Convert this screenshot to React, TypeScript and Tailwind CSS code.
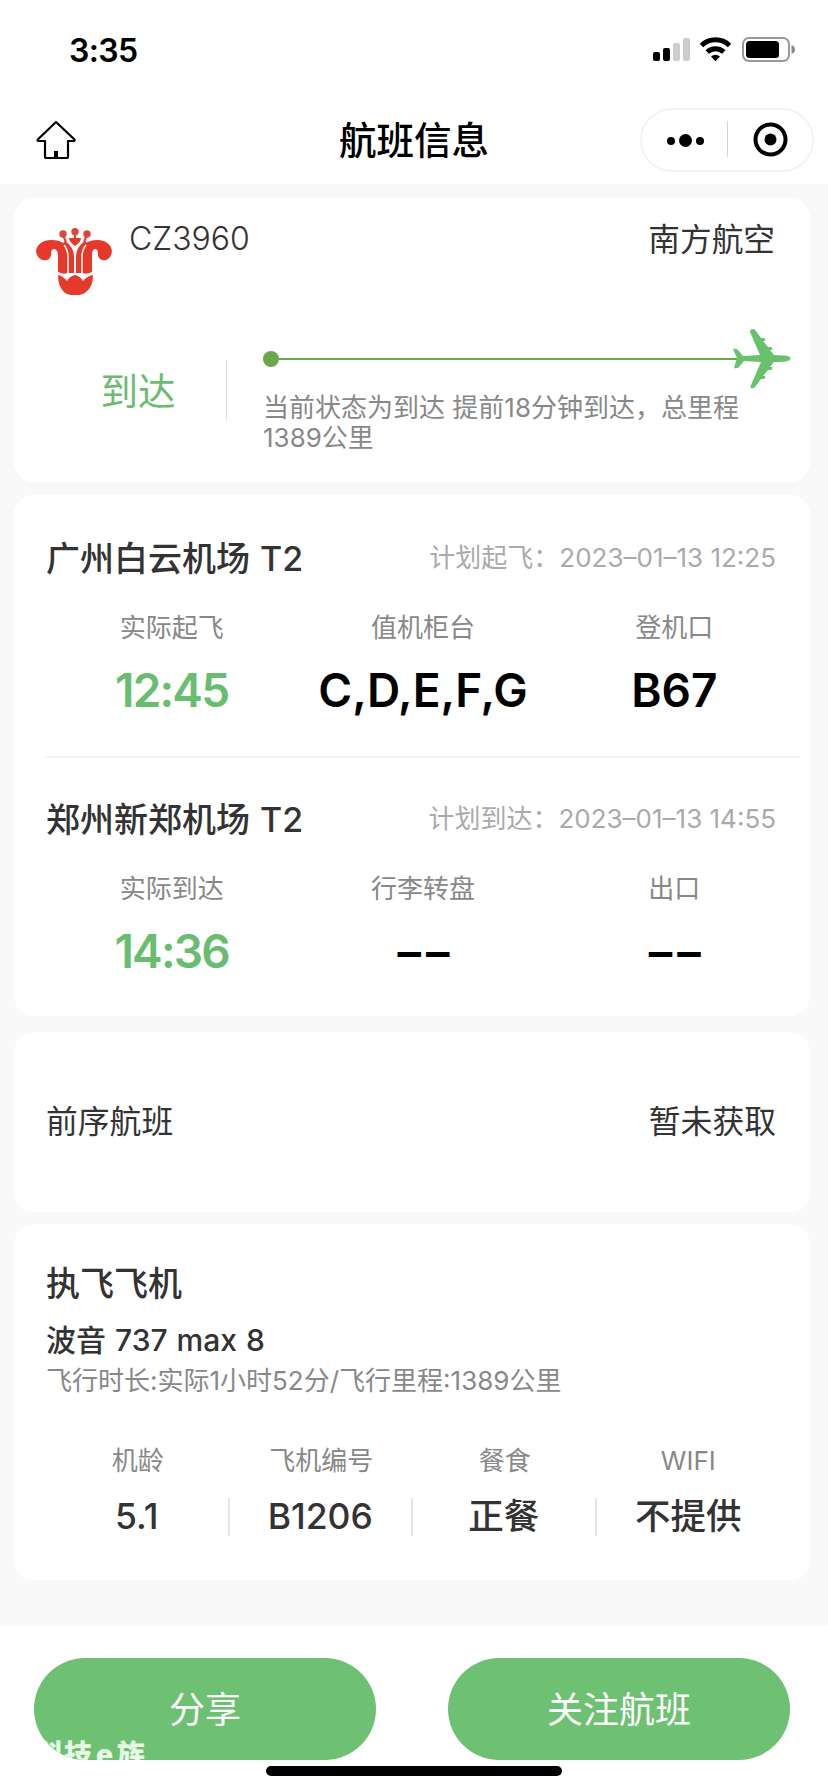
import React from "react";

const airports = [
    {
        name: "广州白云机场 T2",
        plan: "计划起飞：",
        planTime: "2023–01–13 12:25",
        items: [
            { label: "实际起飞", value: "12:45", green: true },
            { label: "值机柜台", value: "C,D,E,F,G" },
            { label: "登机口", value: "B67" },
        ],
    },
    {
        name: "郑州新郑机场 T2",
        plan: "计划到达：",
        planTime: "2023–01–13 14:55",
        items: [
            { label: "实际到达", value: "14:36", green: true },
            { label: "行李转盘", value: "––" },
            { label: "出口", value: "––" },
        ],
    },
];

const aircraft = [
    { label: "机龄", value: "5.1" },
    { label: "飞机编号", value: "B1206" },
    { label: "餐食", value: "正餐" },
    { label: "WIFI", value: "不提供" },
];

const StatusBar = () => (
    <div className="flex h-[98px] items-center justify-between pl-[69px] pr-[33px]">
        <span className="pt-[3px] text-[32px] leading-none font-semibold tracking-[-0.6px]">3:35</span>
        <svg width="143" height="28" viewBox="0 0 143 28">
            <rect x="1" y="17" width="7" height="9" rx="2" />
            <rect x="11" y="13" width="7" height="13" rx="2" />
            <rect x="21" y="8" width="7" height="18" rx="2" fill="#cccccc" />
            <rect x="31" y="3" width="7" height="23" rx="2" fill="#cccccc" />
            <g fill="none" stroke="#000" strokeWidth="5">
                <path d="M49.500 10.500a20 20 0 0 1 28 0" />
                <path d="M55.200 17a12 12 0 0 1 16.600 0" />
            </g>
            <path d="M59 21.500q4.500-3.600 9 0l-4.500 4.800z" />
            <rect x="91" y="3" width="46" height="23" rx="6" fill="none" stroke="#999" strokeWidth="2" />
            <rect x="94" y="6" width="33" height="17" rx="3.500" />
            <path d="M139.500 10q3.500 1.500 3.500 4.500t-3.500 4.500z" fill="#888" />
        </svg>
    </div>
);

const NavBar = () => (
    <div className="flex h-[86px] items-center justify-between pb-[2px] pl-[36px] pr-[14px]">
        <div className="w-[152px]">
            <svg width="41" height="41" viewBox="0 0 41 41" fill="none" stroke="#000" strokeWidth="2.200" strokeLinejoin="round">
                <path d="M20 2 L38.500 19.500 Q39 21 37.500 21 H32 V36.500 Q32 38 30.500 38 H10.500 Q9 38 9 36.500 V21 H2.500 Q1 21 1.800 19.500 Z" />
                <path d="M20 31v7" strokeWidth="4" />
            </svg>
        </div>
        <h1 className="pt-[2px] text-[37.5px] leading-none font-medium">航班信息</h1>
        <div className="flex h-[64px] w-[174px] items-center rounded-full border-2 border-[#f3f3f3]">
            <svg width="170" height="60" viewBox="0 0 170 60">
                <circle cx="29" cy="31" r="4" />
                <circle cx="43.500" cy="30.500" r="6.500" />
                <circle cx="58" cy="31" r="4" />
                <path d="M85.500 11v36" stroke="#d4d4d4" />
                <circle cx="128.500" cy="29.500" r="15" fill="none" stroke="#000" strokeWidth="4" />
                <circle cx="128.500" cy="29.500" r="6" />
            </svg>
        </div>
    </div>
);

const AirlineLogo = () => (
    <svg width="76" height="68" viewBox="0 0 76 68" fill="#e5392b">
        <path d="M0 23C1 16 7 12 15 12 27 12 34 18 35 28V45Q34 43 31 45 28 47 22 44V28C22 21 18 20 16 22 14 24 17 27 13 31 9 34 1 32 0 23z" />
        <path d="M76 23C75 16 69 12 62 12 50 12 44 18 43 28V45Q44 43 47 45 50 47 56 44V28C56 21 59 20 61 22 63 24 60 27 64 31 68 34 75 32 76 23z" />
        <path d="M29 13q9 6 9 16v16h-5V28q0-8-6-13z" />
        <path d="M49 13q-9 6-9 16v16h5V28q0-8 6-13z" />
        <path d="M28 17q4 5 4 12v16M50 17q-4 5-4 12v16M39 22v23" fill="none" stroke="#fff" strokeWidth="1.500" />
        <path d="M33 10h12q0 4-6 8-6-4-6-8z" />
        <path d="M27 7l3 7M51 7l-3 7M39 4v8" fill="none" stroke="#e5392b" strokeWidth="2" />
        <circle cx="27" cy="6" r="3.700" fill="#d8483c" />
        <circle cx="39" cy="3.800" r="3.700" fill="#d8483c" />
        <circle cx="51" cy="6" r="3.700" fill="#d8483c" />
        <path d="M22 47q5 1 9 6 3-5 8-6 5 1 8 6 4-5 10-6 0 12-7 17-3 3-7 3h-8q-4 0-7-3-6-6-6-17z" />
    </svg>
);

const Plane = () => (
    <svg width="60" height="62" viewBox="0 0 60 62" fill="#69c16c">
        <path d="M1 21q3-1 5 1l5 6 17-1L18 4q0-3 3-3 2 0 3 2l5 7h3q2 1 1 3h-2l5 6h3q2 1 1 3h-2l4 5q11 0 15 1.500 3 1.500 0 4-4 1.500-15 1.500l-4 5h2q1 2-1 3h-3l-5 6h2q1 2-1 3h-3l-6 8q-2 2-4 1-1-1 0-3l10-23-17-1-5 6q-2 2-5 1l3-10z" />
    </svg>
);

const App = () => {
    return (
        <div className="flex h-[1792px] w-[828px] flex-col overflow-hidden bg-white font-[Inter,'Noto_Sans_CJK_SC',sans-serif] text-black">
            <StatusBar />
            <NavBar />

            <main className="h-[1441px] bg-[#f9f9f9] pt-[14px] pr-[18px] pl-[14px] text-[#333]">
                <section className="h-[284px] rounded-[20px] bg-white pt-[24px] pr-[18px] pl-[22px]">
                    <div className="flex h-[83px]">
                        <div className="pt-[6px]">
                            <AirlineLogo />
                        </div>
                        <span className="ml-[17px] text-[32px] leading-[34px] font-light">CZ3960</span>
                        <span className="ml-auto pt-px pr-[17px] text-[31.7px] leading-[34px]">南方航空</span>
                    </div>
                    <div className="flex">
                        <div className="mt-[55px] flex h-[60px] w-[191px] items-center justify-center self-start border-r border-[#ddd] pt-[4px] pl-[14px] text-[37.500px] leading-none text-[#69bd70]">
                            到达
                        </div>
                        <div className="ml-[36px] flex-1">
                            <div className="mt-[22px] flex h-[62px] items-center pt-px">
                                <span className="size-4 rounded-full bg-[#6aa84f]" />
                                <span className="h-[2px] flex-1 bg-[#6aa84f]" />
                                <span className="-ml-[5px]">
                                    <Plane />
                                </span>
                            </div>
                            <p className="w-[490px] pt-[4px] text-[26px] leading-[30px] text-[#888]">
                                当前状态为到达 提前18分钟到达，总里程
                                <br />
                                1389公里
                            </p>
                        </div>
                    </div>
                </section>

                <section className="mt-[13px] h-[521px] rounded-[20px] bg-white pl-[32px]">
                    {airports.map((airport, i) => (
                        <div key={airport.name} className={i ? "mr-[10px] h-[260px] border-t-2 border-[#f1f1f1]" : "mr-[10px] h-[261px]"}>
                            <div className={i ? "flex items-center justify-between pt-[44px] pr-[24px]" : "flex items-center justify-between pt-[46px] pr-[24px]"}>
                                <h2 className="text-[34px] leading-[36px] font-medium [word-spacing:1px]">{airport.name}</h2>
                                <div className="pb-[2px] text-[26px] leading-[34px] text-[#aaa]">
                                    {airport.plan}
                                    {airport.planTime}
                                </div>
                            </div>
                            <div className="grid grid-cols-3 text-center">
                                {airport.items.map((item) => (
                                    <div key={item.label} className="pt-[36px]">
                                        <div className="text-[26px] leading-[30px] text-[#888]">{item.label}</div>
                                        <div
                                            className={
                                                item.green
                                                    ? "mt-[19px] text-[46px] leading-[56px] font-semibold tracking-[-1.8px] text-[#69bd70]"
                                                    : item.value === "––"
                                                      ? "mt-[20px] pl-[6px] text-[47px] leading-[56px] font-semibold tracking-[5px] text-black"
                                                      : "mt-[19px] text-[46px] leading-[56px] font-semibold text-black"
                                            }
                                        >
                                            {item.value}
                                        </div>
                                    </div>
                                ))}
                            </div>
                        </div>
                    ))}
                </section>

                <section className="mt-[16px] flex h-[180px] items-center justify-between rounded-[20px] bg-white pr-[34px] pl-[32px] text-[31.800px]">
                    <span>前序航班</span>
                    <span>暂未获取</span>
                </section>

                <section className="mt-[12px] h-[356px] rounded-[20px] bg-white pt-[41px] pl-[32px]">
                    <h2 className="text-[34px] leading-[38px] font-medium">执飞飞机</h2>
                    <h3 className="mt-[19px] text-[30px] leading-[36px] font-medium [word-spacing:1px]">波音 737 max 8</h3>
                    <p className="mt-[7px] text-[26px] leading-[32px] text-[#888]">
                        飞行时长:实际1小时52分/飞行里程:1389公里
                    </p>
                    <div className="mt-[48px] flex">
                        {aircraft.map((item, i) => (
                            <div key={item.label} className="w-[183.5px] text-center">
                                <div className="text-[26px] leading-[32px] text-[#888]">{item.label}</div>
                                <div
                                    className={
                                        i < aircraft.length - 1
                                            ? "mt-[21px] h-[38px] border-r-2 border-[#e5e5e5] text-[35.5px] leading-[38px] font-medium"
                                            : "mt-[21px] h-[38px] text-[35.5px] leading-[38px] font-medium"
                                    }
                                >
                                    {item.value}
                                </div>
                            </div>
                        ))}
                    </div>
                </section>
            </main>

            <footer className="flex flex-1 flex-col items-center pt-[33px]">
                <div className="flex gap-[72px] pr-[4px] text-[36px] text-white">
                    <button className="relative h-[102px] w-[342px] overflow-hidden rounded-full bg-[#6ec072] pt-[2px]">
                        分享
                        <span className="absolute top-[81px] left-[2px] text-[28px] leading-[32px] font-black whitespace-nowrap text-[#e8f8e6]">
                            科技
                            <span className="inline-block w-[25px] text-center">e</span>族
                        </span>
                    </button>
                    <button className="h-[102px] w-[342px] rounded-full bg-[#6ec072] pt-[2px]">关注航班</button>
                </div>
                <div className="mt-[6px] h-[10px] w-[296px] rounded-full bg-black" />
            </footer>
        </div>
    );
};

export default App;
